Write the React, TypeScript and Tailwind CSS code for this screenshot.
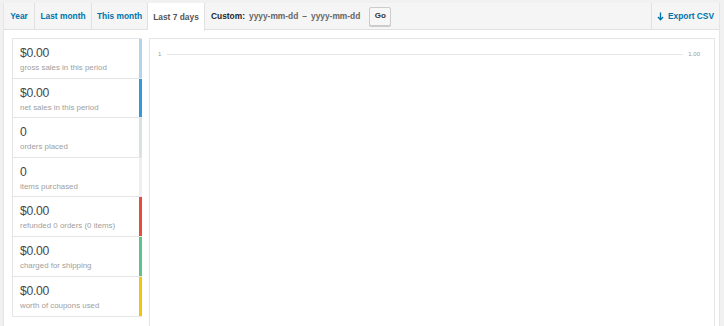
import React from "react";

const rows = [
  { v: "$0.00", l: "gross sales in this period", c: "#b1d4ea" },
  { v: "$0.00", l: "net sales in this period", c: "#3498db" },
  { v: "0", l: "orders placed", c: "#dbe1e3" },
  { v: "0", l: "items purchased", c: "#ecf0f1" },
  { v: "$0.00", l: "refunded 0 orders (0 items)", c: "#e74c3c" },
  { v: "$0.00", l: "charged for shipping", c: "#5cc488" },
  { v: "$0.00", l: "worth of coupons used", c: "#f1c40f" },
];

export default function App() {
  return (
    <div
      className="w-[724px] h-[326px] overflow-hidden bg-[#f1f1f1] pt-[3px] pl-[3px] pr-[4px]"
      style={{ fontFamily: '"Liberation Sans", Arial, sans-serif' }}
    >
      <div className="h-full bg-white border-l border-r border-[#e5e5e5] flex flex-col">
        <div className="h-[27px] flex bg-[#f5f5f5] border-b border-[#e1e1e1] shrink-0">
          <div className="w-[31px] flex items-center justify-center border-r border-[#e1e1e1] text-[8.4px] font-bold text-[#0073aa]">Year</div>
          <div className="w-[57px] flex items-center justify-center border-r border-[#e1e1e1] text-[8.4px] font-bold text-[#0073aa]">Last month</div>
          <div className="w-[56px] flex items-center justify-center border-r border-[#e1e1e1] text-[8.4px] font-bold text-[#0073aa]">This month</div>
          <div className="w-[57px] h-[28px] flex items-center justify-center border-r border-[#e1e1e1] bg-white text-[8.4px] font-bold text-[#555]">Last 7 days</div>
          <div className="flex items-center pl-[6px] text-[8.4px]">
            <span className="font-bold text-[#23282d]">Custom:</span>
            <span className="ml-[4px] font-bold text-[#666]">yyyy-mm-dd</span>
            <span className="mx-[4px] font-bold text-[#666]">–</span>
            <span className="font-bold text-[#666]">yyyy-mm-dd</span>
            <span className="ml-[9px] h-[19px] w-[22px] flex items-center justify-center border border-[#ccc] bg-[#f7f7f7] rounded-[2px] font-bold text-[#333] text-[8px] shadow-[0_1px_0_#ccc]">Go</span>
          </div>
          <div className="flex-1" />
          <div className="w-[68px] flex items-center justify-center gap-[4px] border-l border-[#e1e1e1] text-[8.4px] font-bold text-[#0073aa]">
            <svg width="7" height="9" viewBox="0 0 7 9" fill="none" stroke="#0073aa" strokeWidth="1.3">
              <path d="M3.5 0.5v7M1 5l2.5 2.7L6 5" />
            </svg>
            <span>Export CSV</span>
          </div>
        </div>
        <div className="flex flex-1 pt-[8px] pl-[8px] pr-[4px] gap-[7px] min-h-0">
          <div className="w-[130px] self-start border border-[#e5e5e5] border-r-0 bg-white">
            {rows.map((r, i) => (
              <div
                key={i}
                className="h-[39.6px] flex border-b border-[#e5e5e5] last:border-b-0"
              >
                <div className="flex-1 pl-[7px] pt-[8px]">
                  <div className="text-[12.2px] leading-[13px] text-[#464646] tracking-[-0.3px]">{r.v}</div>
                  <div className="mt-[3px] text-[7.9px] leading-[10px] text-[#a0a0a0]">{r.l}</div>
                </div>
                <div className="w-[3px]" style={{ background: r.c }} />
              </div>
            ))}
          </div>
          <div className="flex-1 border border-[#e5e5e5] border-b-0 bg-white relative">
            <div className="flex items-center mt-[11px] pl-[8px] pr-[14px]">
              <span className="text-[6px] text-[#999] w-[9px]">1</span>
              <div className="flex-1 h-px bg-[#e8e8e8]" />
              <span className="text-[6px] text-[#999] ml-[5px]">1.00</span>
            </div>
          </div>
        </div>
      </div>
    </div>
  );
}
